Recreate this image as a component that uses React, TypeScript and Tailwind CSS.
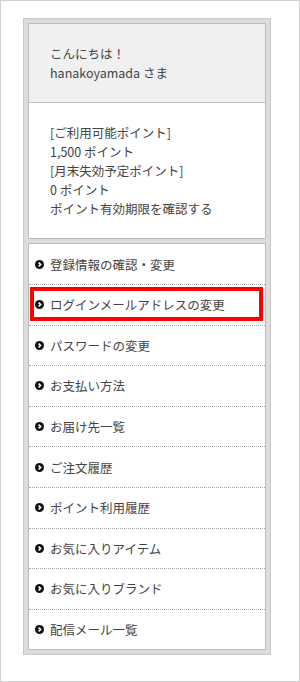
import React from "react";

const menuItems = [
  "登録情報の確認・変更",
  "ログインメールアドレスの変更",
  "パスワードの変更",
  "お支払い方法",
  "お届け先一覧",
  "ご注文履歴",
  "ポイント利用履歴",
  "お気に入りアイテム",
  "お気に入りブランド",
  "配信メール一覧",
];

const ArrowIcon = () => (
  <svg width="9" height="9" viewBox="0 0 9 9" className="shrink-0">
    <circle cx="4.5" cy="4.5" r="4.5" fill="#111" />
    <path d="M3.6 2.6 L5.6 4.5 L3.6 6.4" stroke="#fff" strokeWidth="1.6" fill="none" />
  </svg>
);

const App = () => {
  return (
    <div
      className="w-[300px] h-[682px] border border-[#d0d0d0] bg-white text-[#444] text-[12.5px] leading-[19px] overflow-hidden"
      style={{ fontFamily: '"Noto Sans CJK JP", "Noto Sans", sans-serif' }}
    >
      {/* Frame */}
      <div className="mt-[17px] ml-[22px] w-[248px] border border-[#c8c8c8] bg-[#dcdcdc] p-[4px]">
        {/* Greeting + points */}
        <div className="border border-[#bdbdbd] bg-white">
          <div className="bg-[#f0f0f0] py-[20px] pl-[21px] border-b border-[#bdbdbd]">
            <p>こんにちは！</p>
            <p>hanakoyamada さま</p>
          </div>
          <div className="py-[20px] pl-[21px]">
            <p>[ご利用可能ポイント]</p>
            <p>1,500 ポイント</p>
            <p>[月末失効予定ポイント]</p>
            <p>0 ポイント</p>
            <p>ポイント有効期限を確認する</p>
          </div>
        </div>

        {/* Menu */}
        <ul className="mt-[4px] border border-[#bdbdbd] bg-white">
          {menuItems.map((label, i) => (
            <li
              key={label}
              className={`relative flex items-center gap-[6px] pl-[6px] ${
                i > 0 ? "h-[40.6px] border-t border-dotted border-[#a8a8a8]" : "h-[40px]"
              }`}
            >
              <ArrowIcon />
              <span>{label}</span>
              {i === 1 && (
                <div className="absolute left-[1px] right-[2px] top-[2px] bottom-[4px] border-[4px] border-[#ff0000]" />
              )}
            </li>
          ))}
        </ul>
      </div>
    </div>
  );
};

export default App;
